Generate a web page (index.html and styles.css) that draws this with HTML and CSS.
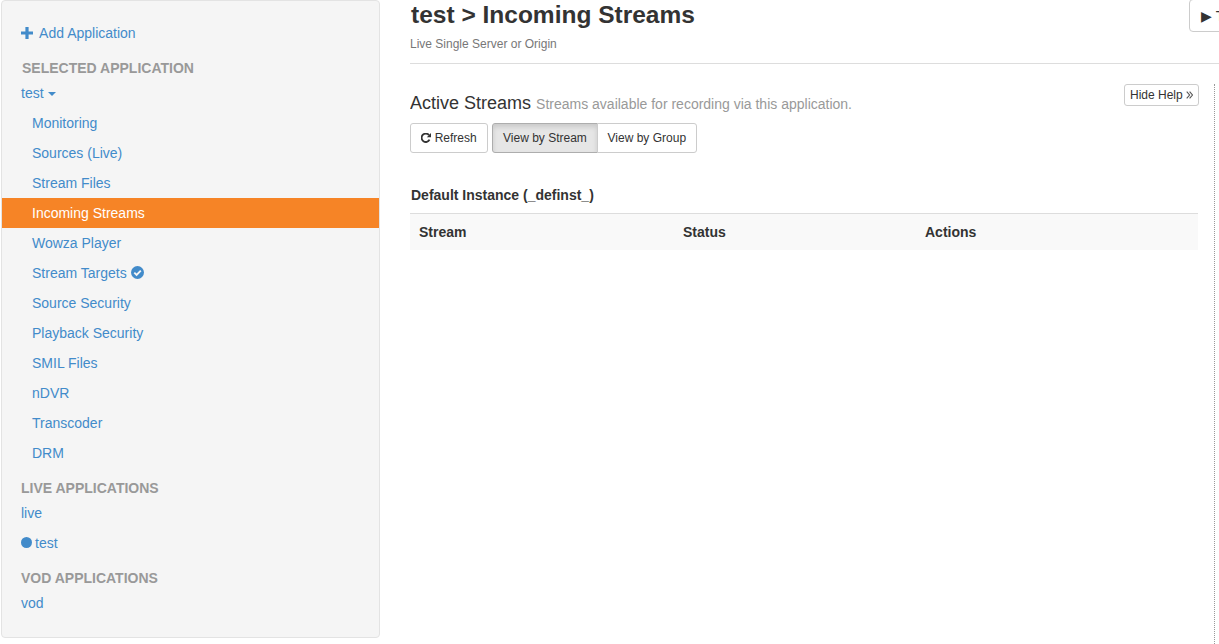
FILE: index.html
```html
<!DOCTYPE html>
<html lang="en">

<head>
  <meta charset="UTF-8">
  <title>Incoming Streams</title>
  <link rel="stylesheet" href="styles.css">
</head>
<body>
  <div class="page">
    <div class="sidebar">
      <a class="add-app" href="#">
        <svg class="plus" width="12" height="12" viewBox="0 0 12 12"><path d="M4.4 0h3.2v4.4H12v3.2H7.6V12H4.4V7.6H0V4.4h4.4z"/></svg>
        Add Application
      </a>
      <h5 class="first">SELECTED APPLICATION</h5>
      <a class="app" href="#">test <span class="caret"></span></a>
      <ul>
        <li><a href="#">Monitoring</a></li>
        <li><a href="#">Sources (Live)</a></li>
        <li><a href="#">Stream Files</a></li>
        <li class="active"><a href="#">Incoming Streams</a></li>
        <li><a href="#">Wowza Player</a></li>
        <li>
          <a href="#">Stream Targets
            <svg class="check" width="13" height="13" viewBox="0 0 13 13"><circle cx="6.5" cy="6.5" r="6.5"/><path d="M3.3 6.7l2.3 2.3 4.2-4.3" fill="none" stroke="#f5f5f5" stroke-width="1.9"/></svg>
          </a>
        </li>
        <li><a href="#">Source Security</a></li>
        <li><a href="#">Playback Security</a></li>
        <li><a href="#">SMIL Files</a></li>
        <li><a href="#">nDVR</a></li>
        <li><a href="#">Transcoder</a></li>
        <li><a href="#">DRM</a></li>
      </ul>
      <h5>LIVE APPLICATIONS</h5>
      <a class="app" href="#">live</a>
      <a class="app" href="#"><span class="dot"></span>test</a>
      <h5>VOD APPLICATIONS</h5>
      <a class="app" href="#">vod</a>
    </div>

    <div class="main">
      <div class="header">
        <div class="titles">
          <h1>test &gt; Incoming Streams</h1>
          <p class="sub">Live Single Server or Origin</p>
        </div>
        <button class="btn tour">&#9654; Tour</button>
      </div>
      <div class="body-row">
        <div class="content">
          <button class="btn help">
            Hide Help
            <svg class="chevrons" width="7" height="8" viewBox="0 0 7 8"><path d="M.7.7L3.6 4 .7 7.3M3.6.7L6.5 4 3.6 7.3" fill="none" stroke="#555" stroke-width="1.1"/></svg>
          </button>
          <h3>Active Streams <small>Streams available for recording via this application.</small></h3>
          <div class="toolbar">
            <button class="btn refresh-btn">
              <svg class="refresh" width="10" height="10" viewBox="0 0 12 12"><path d="M10.2 8A5 5 0 1 1 9.6 2.6" fill="none" stroke="#333" stroke-width="2.2"/><path d="M12 0v5H7z" fill="#333"/></svg>
              Refresh
            </button>
            <div class="group">
              <button class="btn pressed">View by Stream</button>
              <button class="btn">View by Group</button>
            </div>
          </div>
          <h4>Default Instance (_definst_)</h4>
          <table>
            <tr>
              <th class="col-stream">Stream</th>
              <th class="col-status">Status</th>
              <th>Actions</th>
            </tr>
          </table>
        </div>
        <div class="help-col"></div>
      </div>
    </div>
  </div>
</body>

</html>
```

FILE: styles.css
```css
* {
  margin: 0;
  padding: 0;
  box-sizing: border-box;
  list-style: none;
}

html, body {
  height: 100%;
  overflow: hidden;
}

body {
  font-family: "Liberation Sans", Arial, sans-serif;
  font-size: 14px;
  color: #333;
  background: #fff;
}

a {
  color: #428bca;
  text-decoration: none;
}

.page {
  display: flex;
  align-items: flex-start;
  width: 1219px;
}

/* left menu */
.sidebar {
  width: 379px;
  height: 638px;
  margin-left: 1px;
  padding: 17px 0 19px;
  background: #f5f5f5;
  border: 1px solid #e3e3e3;
  border-radius: 4px;
  flex-shrink: 0;
}

.add-app, .app {
  display: block;
  height: 30px;
  line-height: 30px;
  padding-left: 19px;
}

.plus {
  fill: #428bca;
  margin-right: 3px;
  vertical-align: -1px;
}

.sidebar h5 {
  height: 20px;
  margin-top: 10px;
  padding-left: 19px;
  font-size: 14px;
  line-height: 20px;
  color: #999;
}

.sidebar h5.first {
  padding-left: 20px;
}

.caret {
  display: inline-block;
  margin-left: 1px;
  vertical-align: 2px;
  border-top: 4px solid #428bca;
  border-left: 4px solid transparent;
  border-right: 4px solid transparent;
}

.sidebar li a {
  display: block;
  height: 30px;
  line-height: 30px;
  padding-left: 30px;
}

.sidebar li.active {
  background: #f68426;
}

.sidebar li.active a {
  color: #fff;
}

.check {
  fill: #428bca;
  vertical-align: -1px;
}

.dot {
  display: inline-block;
  width: 11px;
  height: 11px;
  margin-right: 3px;
  border-radius: 50%;
  background: #428bca;
}

/* main part */
.main {
  width: 809px;
  margin-left: 30px;
  overflow: hidden;
}

.header {
  display: flex;
  height: 64px;
  border-bottom: 1px solid #ddd;
}

.titles {
  width: 779px;
  flex-shrink: 0;
}

h1 {
  padding-left: 1px;
  font-size: 24.5px;
  line-height: 30px;
  color: #333;
}

.sub {
  margin-top: 7px;
  font-size: 12px;
  line-height: 14px;
  color: #777;
}

.btn {
  padding: 0 10px;
  height: 30px;
  font-family: inherit;
  font-size: 12px;
  color: #333;
  background: #fff;
  border: 1px solid #ccc;
  border-radius: 3px;
}

.tour {
  flex-shrink: 0;
  width: 70px;
  height: 33px;
  margin-top: -1px;
  padding-left: 11px;
  font-size: 14px;
  text-align: left;
  border-radius: 4px;
}

.body-row {
  display: flex;
  padding-top: 20px;
}

.content {
  width: 789px;
  flex-shrink: 0;
}

.help {
  float: right;
  width: 75px;
  height: 22px;
  padding: 0;
}

h3 {
  margin-top: 8px;
  font-size: 18px;
  font-weight: normal;
  line-height: 22px;
  color: #333;
}

h3 small {
  font-size: 14px;
  color: #999;
}

.toolbar {
  display: flex;
  gap: 4px;
  margin-top: 8px;
}

.group {
  display: flex;
}

.group .btn:first-child {
  border-radius: 3px 0 0 3px;
}

.group .btn:last-child {
  width: 100px;
  padding: 0;
  margin-left: -1px;
  border-radius: 0 3px 3px 0;
}

.pressed {
  background: #e6e6e6;
  border-color: #adadad;
  box-shadow: inset 0 3px 5px rgba(0, 0, 0, 0.125);
}

.refresh-btn {
  width: 78px;
  padding: 0;
}

.refresh {
  vertical-align: -1px;
}

h4 {
  margin-top: 34px;
  padding-left: 1px;
  font-size: 14px;
  line-height: 16px;
  color: #333;
}

table {
  width: 788px;
  margin-top: 10px;
  border-collapse: collapse;
  border-top: 1px solid #ddd;
}

th {
  height: 36px;
  padding-left: 9px;
  font-size: 14px;
  text-align: left;
  background: #f9f9f9;
}

.col-stream {
  width: 264px;
}

.col-status {
  width: 242px;
}

.help-col {
  width: 5px;
  height: 560px;
  margin-left: 15px;
  border-left: 1px dotted #999;
}
```
